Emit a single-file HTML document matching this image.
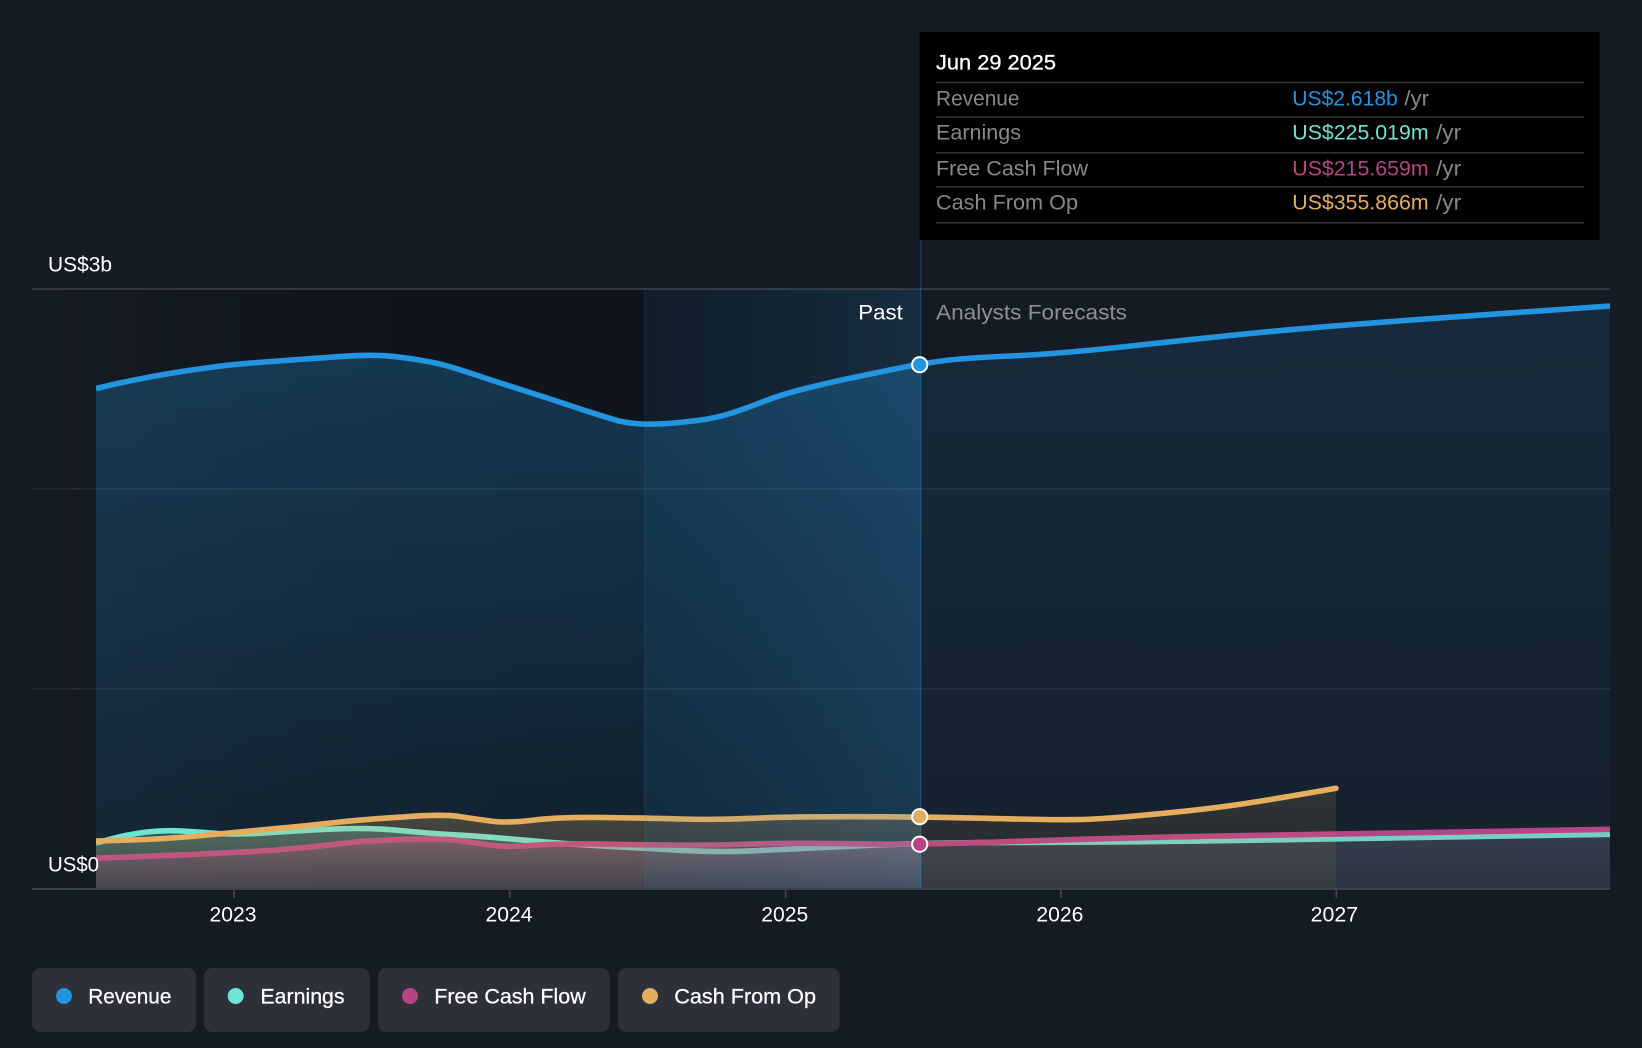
<!DOCTYPE html>
<html>
<head>
<meta charset="utf-8">
<style>
html,body{margin:0;padding:0;background:#151b24;width:1642px;height:1048px;overflow:hidden}
svg{display:block;position:absolute;left:0;top:0}
text{font-family:"Liberation Sans",Arial,sans-serif;font-size:21px}
</style>
</head>
<body>
<svg width="1642" height="1048" viewBox="0 0 1642 1048" xmlns="http://www.w3.org/2000/svg">
<defs>
<linearGradient id="dark" gradientUnits="userSpaceOnUse" x1="32" y1="0" x2="645" y2="0"><stop offset="0" stop-color="#000" stop-opacity="0"/><stop offset=".5" stop-color="#000" stop-opacity=".2"/><stop offset="1" stop-color="#000" stop-opacity=".28"/></linearGradient>
<linearGradient id="dark2" gradientUnits="userSpaceOnUse" x1="645" y1="0" x2="921" y2="0"><stop offset="0" stop-color="#000" stop-opacity=".28"/><stop offset=".45" stop-color="#000" stop-opacity=".2"/><stop offset="1" stop-color="#000" stop-opacity="0"/></linearGradient>
<linearGradient id="band" gradientUnits="userSpaceOnUse" x1="645" y1="0" x2="921" y2="0"><stop offset="0" stop-color="#2394df" stop-opacity=".08"/><stop offset="1" stop-color="#2394df" stop-opacity=".15"/></linearGradient>
<linearGradient id="revP" gradientUnits="userSpaceOnUse" x1="0" y1="300" x2="0" y2="889"><stop offset="0" stop-color="#2394df" stop-opacity=".29"/><stop offset="1" stop-color="#2394df" stop-opacity=".09"/></linearGradient>
<linearGradient id="revF" gradientUnits="userSpaceOnUse" x1="0" y1="300" x2="0" y2="889"><stop offset="0" stop-color="#2394df" stop-opacity=".13"/><stop offset="1" stop-color="#2394df" stop-opacity=".045"/></linearGradient>
<linearGradient id="earnP" gradientUnits="userSpaceOnUse" x1="0" y1="825" x2="0" y2="889"><stop offset="0" stop-color="#6ce5d2" stop-opacity=".27"/><stop offset="1" stop-color="#6ce5d2" stop-opacity=".1"/></linearGradient>
<linearGradient id="earnF" gradientUnits="userSpaceOnUse" x1="0" y1="835" x2="0" y2="889"><stop offset="0" stop-color="#6ce5d2" stop-opacity=".14"/><stop offset="1" stop-color="#6ce5d2" stop-opacity=".09"/></linearGradient>
<linearGradient id="fcfP" gradientUnits="userSpaceOnUse" x1="0" y1="835" x2="0" y2="889"><stop offset="0" stop-color="#b84483" stop-opacity=".36"/><stop offset="1" stop-color="#b84483" stop-opacity=".14"/></linearGradient>
<linearGradient id="fcfF" gradientUnits="userSpaceOnUse" x1="0" y1="830" x2="0" y2="889"><stop offset="0" stop-color="#b84483" stop-opacity=".14"/><stop offset="1" stop-color="#b84483" stop-opacity=".09"/></linearGradient>
<linearGradient id="cfoP" gradientUnits="userSpaceOnUse" x1="0" y1="815" x2="0" y2="889"><stop offset="0" stop-color="#e5ae5f" stop-opacity=".25"/><stop offset="1" stop-color="#e5ae5f" stop-opacity=".1"/></linearGradient>
<linearGradient id="cfoF" gradientUnits="userSpaceOnUse" x1="0" y1="790" x2="0" y2="889"><stop offset="0" stop-color="#e5ae5f" stop-opacity=".14"/><stop offset=".4" stop-color="#e5ae5f" stop-opacity=".09"/><stop offset="1" stop-color="#e5ae5f" stop-opacity=".05"/></linearGradient>
<clipPath id="past"><rect x="96" y="280" width="825" height="609"/></clipPath>
<clipPath id="fore"><rect x="921" y="280" width="689" height="609"/></clipPath>
<clipPath id="plot"><rect x="96" y="280" width="1514" height="612"/></clipPath>
<path id="revL" d="M96 388.5 L119.5 383 Q143 378 166.5 374 Q190 370 213 367 Q236 364 264.5 362 Q293 360 316.5 358.2 Q340 356.5 354 355.7 Q368 355 380.5 355.5 Q393 356 406.5 358 Q420 360 433 362.5 Q446 365 473 374 Q500 383 530 392.5 Q560 402 585 410.5 Q610 418.5 619 421 Q630 423.5 642 424 Q650 424.3 661 423.9 Q677 423 697 420.5 Q717 418 733.5 412.5 Q750 407 765 401 Q780 395 803.5 389 Q827 383 860 376.1 Q893 369.3 906.5 366.6 Q920 364 941.5 361 Q963 358 1010.5 356 Q1058 354 1131 346 Q1204 338 1267 331.8 Q1330 325.7 1470 315.8 L1610 306"/>
<path id="revA" d="M96 388.5 L119.5 383 Q143 378 166.5 374 Q190 370 213 367 Q236 364 264.5 362 Q293 360 316.5 358.2 Q340 356.5 354 355.7 Q368 355 380.5 355.5 Q393 356 406.5 358 Q420 360 433 362.5 Q446 365 473 374 Q500 383 530 392.5 Q560 402 585 410.5 Q610 418.5 619 421 Q630 423.5 642 424 Q650 424.3 661 423.9 Q677 423 697 420.5 Q717 418 733.5 412.5 Q750 407 765 401 Q780 395 803.5 389 Q827 383 860 376.1 Q893 369.3 906.5 366.6 Q920 364 941.5 361 Q963 358 1010.5 356 Q1058 354 1131 346 Q1204 338 1267 331.8 Q1330 325.7 1470 315.8 L1610 306 L1610 889 L96 889 Z"/>
<path id="earnL" d="M96 843 L113 838.5 Q130 834 147 832 Q164 830 182 831 Q200 832 218 833.5 Q236 835 271.5 832.5 Q307 830 339 828.8 Q371 827.7 399.5 830.5 Q428 833.3 459 835.1 Q490 837 525 840.2 Q560 843.5 602.5 845.9 Q645 848.3 681 850.3 Q717 852.3 753 850.8 Q789 849.3 854.5 846.1 Q920 842.5 1020 842.4 Q1120 842.3 1228 840.6 L1610 834.3"/>
<path id="earnA" d="M96 843 L113 838.5 Q130 834 147 832 Q164 830 182 831 Q200 832 218 833.5 Q236 835 271.5 832.5 Q307 830 339 828.8 Q371 827.7 399.5 830.5 Q428 833.3 459 835.1 Q490 837 525 840.2 Q560 843.5 602.5 845.9 Q645 848.3 681 850.3 Q717 852.3 753 850.8 Q789 849.3 854.5 846.1 Q920 842.5 1020 842.4 Q1120 842.3 1228 840.6 L1610 834.3 L1610 889 L96 889 Z"/>
<path id="fcfL" d="M96 858.3 L169.5 855.3 Q243 852.3 275 850 Q307 847.7 335.5 844.2 Q364 840.7 403.5 839.5 Q443 838.3 459 840.6 Q475 843 491 845.1 Q507 847.3 533.5 845.3 Q560 843.3 602.5 844.1 Q645 845 681 845.1 Q717 845.3 752.5 844 Q788 842.7 854 843.8 Q920 845 1010 841.6 Q1100 838.3 1218 836.1 L1610 829.3"/>
<path id="fcfA" d="M96 858.3 L169.5 855.3 Q243 852.3 275 850 Q307 847.7 335.5 844.2 Q364 840.7 403.5 839.5 Q443 838.3 459 840.6 Q475 843 491 845.1 Q507 847.3 533.5 845.3 Q560 843.3 602.5 844.1 Q645 845 681 845.1 Q717 845.3 752.5 844 Q788 842.7 854 843.8 Q920 845 1010 841.6 Q1100 838.3 1218 836.1 L1610 829.3 L1610 889 L96 889 Z"/>
<path id="cfoL" d="M96 841 L130.5 840 Q165 839 202.5 835.5 Q240 832 273.5 828.8 Q307 825.7 335.5 822.5 Q364 819.3 403.5 816.9 Q443 814 459 816.5 Q475 819 491 821.1 Q507 823.3 533.5 820.1 Q560 817 602.5 817.5 Q645 818 681 819 Q717 820 752.5 818.3 Q788 816.7 854 816.7 Q920 816.7 986.5 818.3 Q1053 820 1076.5 819.6 Q1100 819.3 1150 814.6 Q1200 810 1235 805 Q1270 800 1336 788.3"/>
<path id="cfoA" d="M96 841 L130.5 840 Q165 839 202.5 835.5 Q240 832 273.5 828.8 Q307 825.7 335.5 822.5 Q364 819.3 403.5 816.9 Q443 814 459 816.5 Q475 819 491 821.1 Q507 823.3 533.5 820.1 Q560 817 602.5 817.5 Q645 818 681 819 Q717 820 752.5 818.3 Q788 816.7 854 816.7 Q920 816.7 986.5 818.3 Q1053 820 1076.5 819.6 Q1100 819.3 1150 814.6 Q1200 810 1235 805 Q1270 800 1336 788.3 L1336 889 L96 889 Z"/>
</defs>

<rect width="1642" height="1048" fill="#151b24"/>

<!-- background shading -->
<rect x="32" y="289" width="613" height="600" fill="url(#dark)"/>
<rect x="645" y="289" width="276" height="600" fill="url(#dark2)"/>

<!-- revenue area -->
<use href="#revA" fill="url(#revP)" clip-path="url(#past)"/>
<use href="#revA" fill="url(#revF)" clip-path="url(#fore)"/>

<!-- grid -->
<line x1="32" y1="289" x2="1610" y2="289" stroke="#3d4148" stroke-width="1.5"/>
<line x1="32" y1="489" x2="1610" y2="489" stroke="#fff" stroke-opacity=".08" stroke-width="1.5"/>
<line x1="32" y1="689" x2="1610" y2="689" stroke="#fff" stroke-opacity=".08" stroke-width="1.5"/>

<g clip-path="url(#plot)" fill="none" stroke-width="5.6">
<use href="#revL" stroke="#2394df"/>
<use href="#earnA" stroke="none" fill="url(#earnP)" clip-path="url(#past)"/>
<use href="#earnA" stroke="none" fill="url(#earnF)" clip-path="url(#fore)"/>
<use href="#earnL" stroke="#6ce5d2"/>
<use href="#fcfA" stroke="none" fill="url(#fcfP)" clip-path="url(#past)"/>
<use href="#fcfA" stroke="none" fill="url(#fcfF)" clip-path="url(#fore)"/>
<use href="#fcfL" stroke="#b84483"/>
<use href="#cfoA" stroke="none" fill="url(#cfoP)" clip-path="url(#past)"/>
<use href="#cfoA" stroke="none" fill="url(#cfoF)" clip-path="url(#fore)"/>
<use href="#cfoL" stroke="#e5ae5f"/>
</g>
<circle cx="1336" cy="788.3" r="2.8" fill="#e5ae5f"/>

<!-- past band overlay -->
<rect x="645" y="289" width="276" height="600" fill="url(#band)"/>
<line x1="645" y1="289" x2="645" y2="889" stroke="#2394df" stroke-opacity=".15" stroke-width="1.5"/>
<line x1="920.7" y1="240" x2="920.7" y2="889" stroke="#2394df" stroke-opacity=".25" stroke-width="1.5"/>

<!-- axis -->
<line x1="32" y1="889" x2="1610" y2="889" stroke="#3d4148" stroke-width="2"/>
<g stroke="#3d4148" stroke-width="2">
<line x1="234" y1="889" x2="234" y2="898"/>
<line x1="509.7" y1="889" x2="509.7" y2="898"/>
<line x1="785.7" y1="889" x2="785.7" y2="898"/>
<line x1="1061" y1="889" x2="1061" y2="898"/>
<line x1="1336.5" y1="889" x2="1336.5" y2="898"/>
</g>

<!-- markers -->
<g stroke="#fff" stroke-width="2">
<circle cx="919.7" cy="364.7" r="7.6" fill="#2394df"/>
<circle cx="919.7" cy="816.7" r="7.6" fill="#e5ae5f"/>
<circle cx="919.7" cy="844.2" r="7.6" fill="#b84483"/>
</g>

<!-- labels -->
<g fill="#fff">
<text x="48" y="271.5" textLength="64" lengthAdjust="spacingAndGlyphs">US$3b</text>
<text x="48" y="871.5" textLength="51" lengthAdjust="spacingAndGlyphs">US$0</text>
<text x="858.3" y="319.5" textLength="44.5" lengthAdjust="spacingAndGlyphs">Past</text>
<text x="209.5" y="921.5" textLength="47" lengthAdjust="spacingAndGlyphs">2023</text>
<text x="485.5" y="921.5" textLength="47" lengthAdjust="spacingAndGlyphs">2024</text>
<text x="761.3" y="921.5" textLength="47" lengthAdjust="spacingAndGlyphs">2025</text>
<text x="1036.4" y="921.5" textLength="47" lengthAdjust="spacingAndGlyphs">2026</text>
<text x="1310.7" y="921.5" textLength="47.5" lengthAdjust="spacingAndGlyphs">2027</text>
</g>
<text x="936" y="319.5" fill="#8b8f96" textLength="191" lengthAdjust="spacingAndGlyphs">Analysts Forecasts</text>

<!-- tooltip -->
<rect x="919.5" y="32" width="680" height="208" fill="#000"/>
<g stroke="#333" stroke-width="1.5">
<line x1="936" y1="82.5" x2="1584" y2="82.5"/>
<line x1="936" y1="117" x2="1584" y2="117"/>
<line x1="936" y1="152.7" x2="1584" y2="152.7"/>
<line x1="936" y1="186.7" x2="1584" y2="186.7"/>
<line x1="936" y1="222.7" x2="1584" y2="222.7"/>
</g>
<text x="936" y="69.5" fill="#fff" stroke="#fff" stroke-width=".3" textLength="120" lengthAdjust="spacingAndGlyphs">Jun 29 2025</text>
<g fill="#888">
<text x="936" y="105.5" textLength="83.5" lengthAdjust="spacingAndGlyphs">Revenue</text>
<text x="936" y="139.5" textLength="85" lengthAdjust="spacingAndGlyphs">Earnings</text>
<text x="936" y="175.5" textLength="152" lengthAdjust="spacingAndGlyphs">Free Cash Flow</text>
<text x="936" y="209.5" textLength="142" lengthAdjust="spacingAndGlyphs">Cash From Op</text>
<text x="1404.4" y="105.5" textLength="24.6" lengthAdjust="spacingAndGlyphs">/yr</text>
<text x="1436" y="139.5" textLength="25.2" lengthAdjust="spacingAndGlyphs">/yr</text>
<text x="1436" y="175.5" textLength="25.2" lengthAdjust="spacingAndGlyphs">/yr</text>
<text x="1436" y="209.5" textLength="25.2" lengthAdjust="spacingAndGlyphs">/yr</text>
</g>
<text x="1292.3" y="105.5" fill="#2394df" textLength="105.5" lengthAdjust="spacingAndGlyphs">US$2.618b</text>
<text x="1292.3" y="139.5" fill="#6ce5d2" textLength="136.3" lengthAdjust="spacingAndGlyphs">US$225.019m</text>
<text x="1292.3" y="175.5" fill="#b84483" textLength="136.3" lengthAdjust="spacingAndGlyphs">US$215.659m</text>
<text x="1292.3" y="209.5" fill="#e5ae5f" textLength="136.3" lengthAdjust="spacingAndGlyphs">US$355.866m</text>

<!-- legend -->
<g fill="#2d3039">
<rect x="32" y="968" width="164" height="64" rx="8"/>
<rect x="204" y="968" width="165.6" height="64" rx="8"/>
<rect x="378" y="968" width="231.6" height="64" rx="8"/>
<rect x="618" y="968" width="221.6" height="64" rx="8"/>
</g>
<circle cx="64" cy="996" r="8" fill="#2394df"/>
<circle cx="235.7" cy="996" r="8" fill="#6ce5d2"/>
<circle cx="410" cy="996" r="8" fill="#b84483"/>
<circle cx="650" cy="996" r="8" fill="#e5ae5f"/>
<g fill="#fff" stroke="#fff" stroke-width=".25">
<text x="88.2" y="1003.5" textLength="83.2" lengthAdjust="spacingAndGlyphs">Revenue</text>
<text x="260.4" y="1003.5" textLength="84.2" lengthAdjust="spacingAndGlyphs">Earnings</text>
<text x="434.3" y="1003.5" textLength="151.4" lengthAdjust="spacingAndGlyphs">Free Cash Flow</text>
<text x="674.3" y="1003.5" textLength="141.7" lengthAdjust="spacingAndGlyphs">Cash From Op</text>
</g>
</svg>
</body>
</html>
